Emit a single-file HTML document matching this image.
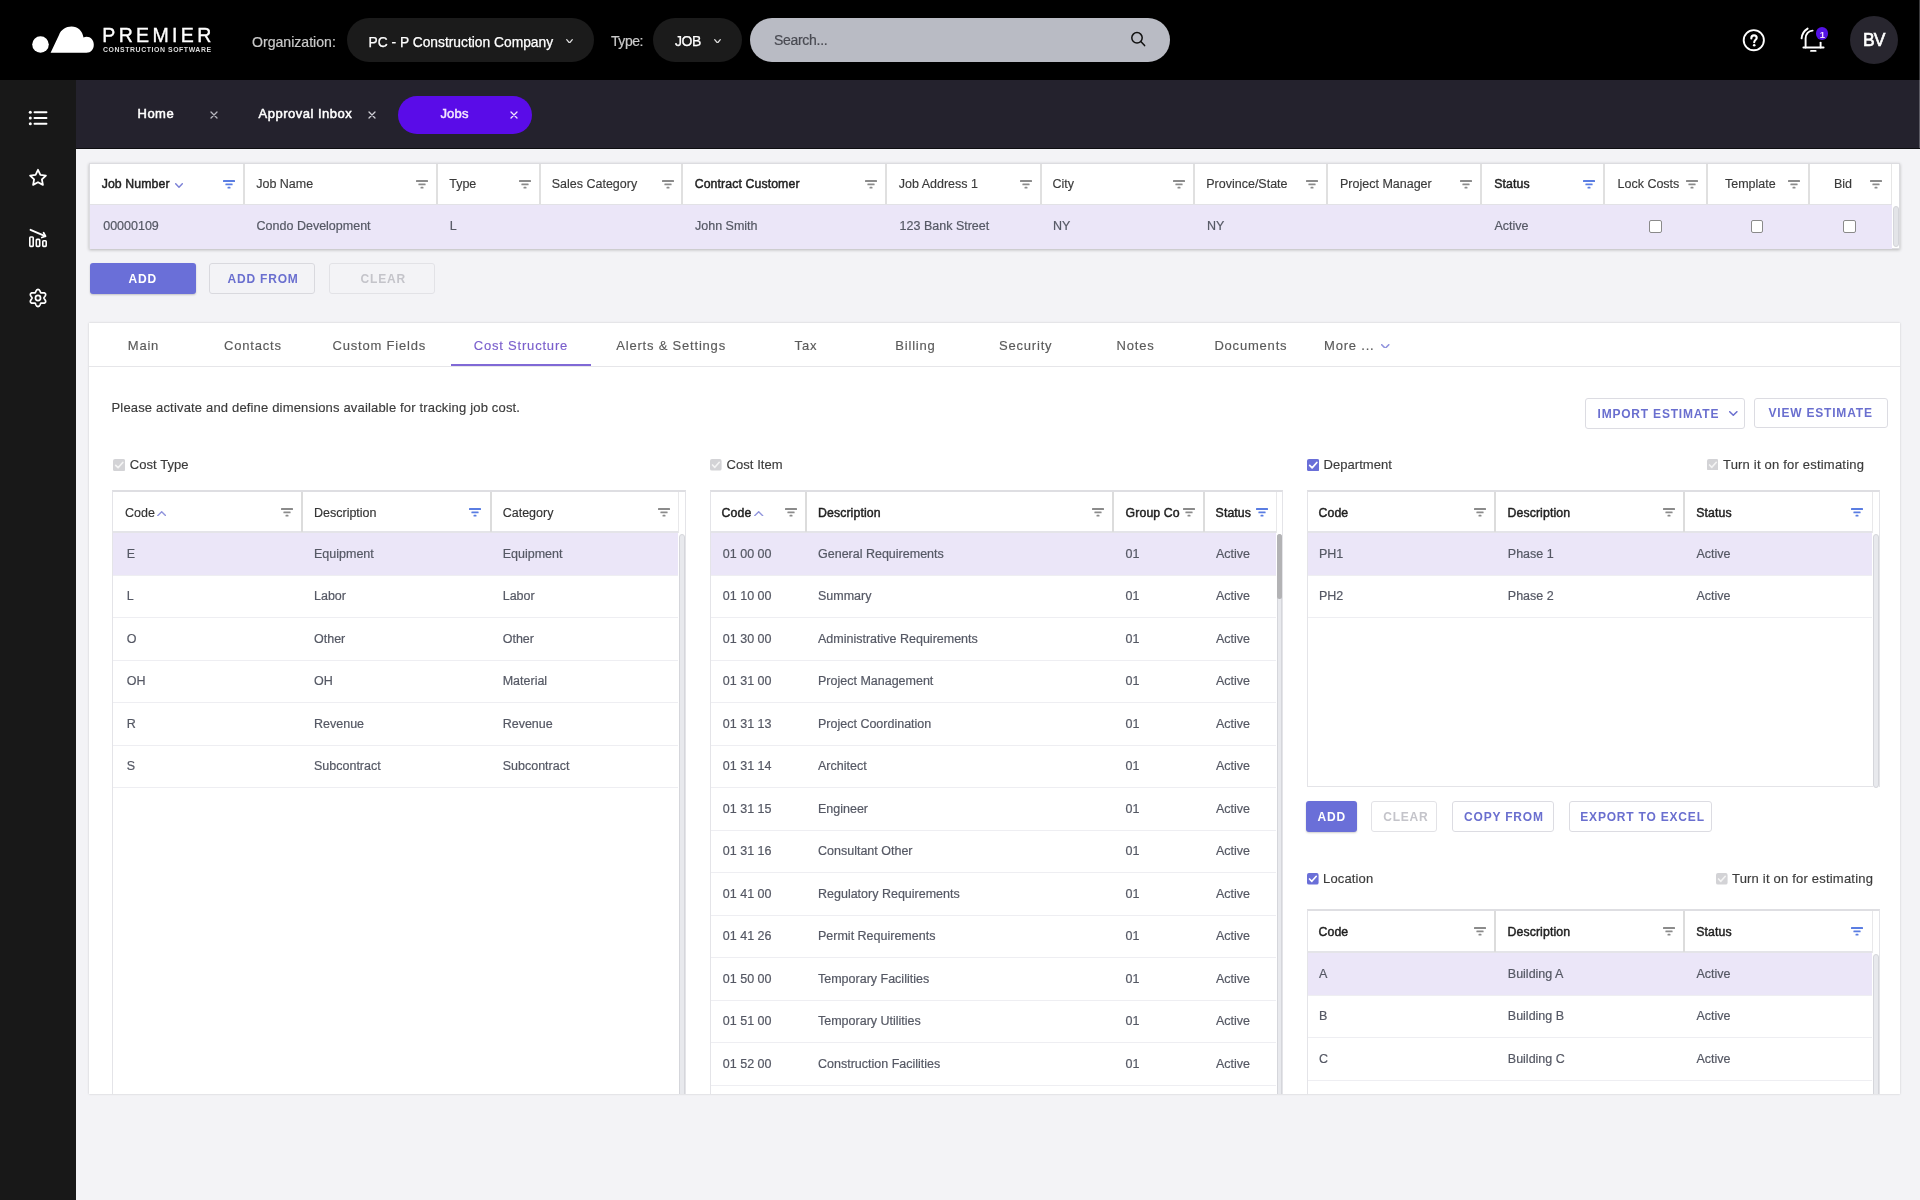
<!DOCTYPE html><html><head><meta charset="utf-8"><style>html,body{margin:0;padding:0;width:1920px;height:1200px;overflow:hidden;background:#f3f3f6;font-family:"Liberation Sans",sans-serif}#root{position:relative;width:1920px;height:1200px;overflow:hidden;will-change:transform}</style></head><body><div id="root"><div style="position:absolute;left:0px;top:0px;width:1920px;height:80px;background:#000"></div><svg style="position:absolute;left:28px;top:22px" width="70" height="36" viewBox="0 0 70 36"><circle cx="12.5" cy="22.5" r="8.3" fill="#fff"/><path d="M22.6 30.7 L31 13 C33 7.5 38 4.5 43.5 4.5 C50 4.5 54.5 9 55.5 15.5 C56.5 15 57.5 14.8 58.5 14.8 C62.8 14.8 65.8 18.3 65.8 22.7 C65.8 27.2 62.8 30.7 58.5 30.7 Z" fill="#fff"/></svg><div style="position:absolute;left:102.3px;top:24px;font-size:19.5px;line-height:22.42px;color:#fff;font-weight:400;letter-spacing:3.35px;white-space:pre;-webkit-text-stroke:0.35px #fff">PREMIER</div><div style="position:absolute;left:103px;top:46px;font-size:6.9px;line-height:7.93px;color:#ddd;font-weight:700;letter-spacing:0.58px;white-space:pre;">CONSTRUCTION SOFTWARE</div><div style="position:absolute;left:252px;top:34px;font-size:14.1px;line-height:16.21px;color:#c9c9c9;font-weight:400;letter-spacing:0px;white-space:pre;-webkit-text-stroke:0.2px #c9c9c9">Organization:</div><div style="position:absolute;left:347px;top:18px;width:247px;height:44px;background:#1b1b1b;border-radius:22px"></div><div style="position:absolute;left:368.5px;top:35px;font-size:13.8px;line-height:15.87px;color:#fff;font-weight:400;letter-spacing:0px;white-space:pre;-webkit-text-stroke:0.25px #fff">PC - P Construction Company</div><svg style="position:absolute;left:566px;top:38.5px" width="7" height="4.5" viewBox="0 0 7 4.5"><path d="M0.7 0.7 L3.5 4.0 L6.3 0.7" fill="none" stroke="#ddd" stroke-width="1.3" stroke-linecap="round" stroke-linejoin="round"/></svg><div style="position:absolute;left:611px;top:33px;font-size:14px;line-height:16.10px;color:#c9c9c9;font-weight:400;letter-spacing:-0.45px;white-space:pre;-webkit-text-stroke:0.2px #c9c9c9">Type:</div><div style="position:absolute;left:653px;top:18px;width:89px;height:44px;background:#1b1b1b;border-radius:22px"></div><div style="position:absolute;left:675px;top:33px;font-size:14px;line-height:16.10px;color:#fff;font-weight:400;letter-spacing:-0.4px;white-space:pre;-webkit-text-stroke:0.25px #fff">JOB</div><svg style="position:absolute;left:714px;top:38.5px" width="7" height="4.5" viewBox="0 0 7 4.5"><path d="M0.7 0.7 L3.5 4.0 L6.3 0.7" fill="none" stroke="#ddd" stroke-width="1.3" stroke-linecap="round" stroke-linejoin="round"/></svg><div style="position:absolute;left:750px;top:18px;width:420px;height:44px;background:#b9bbc4;border-radius:22px"></div><div style="position:absolute;left:774px;top:32px;font-size:14px;line-height:16.10px;color:#494a52;font-weight:400;letter-spacing:-0.3px;white-space:pre;-webkit-text-stroke:0.2px #494a52">Search...</div><svg style="position:absolute;left:1128px;top:29px" width="20" height="20" viewBox="0 0 20 20"><circle cx="9" cy="8.8" r="5.2" fill="none" stroke="#111" stroke-width="1.5"/><path d="M12.8 12.6 L16.6 16.6" stroke="#111" stroke-width="1.5" stroke-linecap="round"/></svg><svg style="position:absolute;left:1740px;top:26px" width="28" height="28" viewBox="0 0 28 28"><circle cx="13.8" cy="14.2" r="10.1" fill="none" stroke="#fff" stroke-width="1.9"/><path d="M11.3 12.4 C11.3 10.5 12.4 9.4 14 9.4 C15.6 9.4 16.7 10.4 16.7 11.9 C16.7 13.6 14.2 14 14.2 16.3" fill="none" stroke="#fff" stroke-width="2.1" stroke-linecap="round"/><circle cx="14.2" cy="19.2" r="1.3" fill="#fff"/></svg><svg style="position:absolute;left:1796px;top:24px" width="34" height="32" viewBox="0 0 34 32"><path d="M7.4 23.5 L27.6 23.5" stroke="#fff" stroke-width="1.9" stroke-linecap="round"/><path d="M9.6 23.5 L9.6 14.5 C9.6 10 12.6 6.8 16.6 6.6" fill="none" stroke="#fff" stroke-width="1.9" stroke-linecap="round"/><path d="M24.6 23.5 L24.6 18.6" fill="none" stroke="#fff" stroke-width="1.9" stroke-linecap="round"/><path d="M5.6 14.4 C5.9 10.4 8 6.8 11.6 4.6" fill="none" stroke="#fff" stroke-width="1.9" stroke-linecap="round"/><path d="M15 26.9 L19.6 26.9" stroke="#fff" stroke-width="1.9" stroke-linecap="round"/></svg><div style="position:absolute;left:1816px;top:27.3px;width:12.4px;height:12.4px;border-radius:50%;background:#5412e6"></div><div style="position:absolute;left:1819.8px;top:30px;font-size:9.5px;line-height:10.92px;color:#f0dcff;font-weight:700;letter-spacing:0px;white-space:pre;">1</div><div style="position:absolute;left:1850px;top:16px;width:48px;height:48px;background:#28262f;border-radius:50%"></div><div style="position:absolute;left:1863px;top:30px;font-size:17.5px;line-height:20.12px;color:#fff;font-weight:400;letter-spacing:-0.8px;white-space:pre;-webkit-text-stroke:0.6px #fff">BV</div><div style="position:absolute;left:0px;top:80px;width:76px;height:1120px;background:#181818"></div><div style="position:absolute;left:76px;top:80px;width:1844px;height:69px;background:#24222d"></div><div style="position:absolute;left:76px;top:148px;width:1844px;height:1px;background:#0d0d10"></div><svg style="position:absolute;left:26px;top:106px" width="24" height="24" viewBox="0 0 24 24"><circle cx="4.3" cy="6.2" r="1.5" fill="#fff"/><circle cx="4.3" cy="12" r="1.5" fill="#fff"/><circle cx="4.3" cy="17.8" r="1.5" fill="#fff"/><path d="M8.5 6.2 H20.5 M8.5 12 H20.5 M8.5 17.8 H20.5" stroke="#fff" stroke-width="1.9" stroke-linecap="round"/></svg><svg style="position:absolute;left:26px;top:166px" width="24" height="24" viewBox="0 0 24 24"><path d="M12 3.8 L14.4 8.9 L19.9 9.6 L15.9 13.4 L16.9 18.9 L12 16.2 L7.1 18.9 L8.1 13.4 L4.1 9.6 L9.6 8.9 Z" fill="none" stroke="#fff" stroke-width="1.8" stroke-linejoin="round"/></svg><svg style="position:absolute;left:26px;top:226px" width="24" height="24" viewBox="0 0 24 24"><path d="M4.5 3.8 L19.2 10.2" stroke="#fff" stroke-width="1.8" stroke-linecap="round"/><path d="M15.8 11.5 L19.5 10.2 L17.6 6.8" fill="none" stroke="#fff" stroke-width="1.8" stroke-linecap="round" stroke-linejoin="round"/><rect x="3.8" y="11" width="3.4" height="9.4" rx="0.8" fill="none" stroke="#fff" stroke-width="1.6"/><rect x="10.3" y="13.4" width="3.4" height="7" rx="0.8" fill="none" stroke="#fff" stroke-width="1.6"/><rect x="16.8" y="14.8" width="3.4" height="5.6" rx="0.8" fill="none" stroke="#fff" stroke-width="1.6"/></svg><svg style="position:absolute;left:26px;top:286px" width="24" height="24" viewBox="0 0 24 24"><path d="M17.90 12.00 L17.99 11.69 L18.19 11.35 L18.47 10.98 L18.79 10.56 L19.10 10.10 L19.36 9.61 L19.56 9.10 L19.64 8.60 L19.61 8.12 L19.45 7.70 L19.16 7.35 L18.77 7.08 L18.29 6.91 L17.75 6.82 L17.20 6.80 L16.64 6.84 L16.12 6.91 L15.66 6.96 L15.27 6.97 L14.95 6.89 L14.72 6.66 L14.53 6.31 L14.35 5.88 L14.14 5.40 L13.90 4.90 L13.61 4.43 L13.27 4.01 L12.87 3.68 L12.45 3.47 L12.00 3.40 L11.55 3.47 L11.13 3.68 L10.73 4.01 L10.39 4.43 L10.10 4.90 L9.86 5.40 L9.65 5.88 L9.47 6.31 L9.28 6.66 L9.05 6.89 L8.73 6.97 L8.34 6.96 L7.88 6.91 L7.36 6.84 L6.80 6.80 L6.25 6.82 L5.71 6.91 L5.23 7.08 L4.84 7.35 L4.55 7.70 L4.39 8.12 L4.36 8.60 L4.44 9.10 L4.64 9.61 L4.90 10.10 L5.21 10.56 L5.53 10.98 L5.81 11.35 L6.01 11.69 L6.10 12.00 L6.01 12.31 L5.81 12.65 L5.53 13.02 L5.21 13.44 L4.90 13.90 L4.64 14.39 L4.44 14.90 L4.36 15.40 L4.39 15.88 L4.55 16.30 L4.84 16.65 L5.23 16.92 L5.71 17.09 L6.25 17.18 L6.80 17.20 L7.36 17.16 L7.88 17.09 L8.34 17.04 L8.73 17.03 L9.05 17.11 L9.28 17.34 L9.47 17.69 L9.65 18.12 L9.86 18.60 L10.10 19.10 L10.39 19.57 L10.73 19.99 L11.13 20.32 L11.55 20.53 L12.00 20.60 L12.45 20.53 L12.87 20.32 L13.27 19.99 L13.61 19.57 L13.90 19.10 L14.14 18.60 L14.35 18.12 L14.53 17.69 L14.72 17.34 L14.95 17.11 L15.27 17.03 L15.66 17.04 L16.12 17.09 L16.64 17.16 L17.20 17.20 L17.75 17.18 L18.29 17.09 L18.77 16.92 L19.16 16.65 L19.45 16.30 L19.61 15.88 L19.64 15.40 L19.56 14.90 L19.36 14.39 L19.10 13.90 L18.79 13.44 L18.47 13.02 L18.19 12.65 L17.99 12.31 Z" fill="none" stroke="#fff" stroke-width="1.7" stroke-linejoin="round"/><circle cx="12" cy="12" r="2.55" fill="none" stroke="#fff" stroke-width="1.7"/></svg><div style="position:absolute;left:137.5px;top:107px;font-size:13px;line-height:14.95px;color:#fff;font-weight:400;letter-spacing:0.5px;white-space:pre;-webkit-text-stroke:0.5px #fff">Home</div><svg style="position:absolute;left:210.0px;top:110.6px" width="8" height="8" viewBox="0 0 8 8"><path d="M1 1 L7 7 M7 1 L1 7" stroke="#b9b9c0" stroke-width="1.3" stroke-linecap="round"/></svg><div style="position:absolute;left:258.5px;top:107px;font-size:13px;line-height:14.95px;color:#fff;font-weight:400;letter-spacing:0.5px;white-space:pre;-webkit-text-stroke:0.5px #fff">Approval Inbox</div><svg style="position:absolute;left:367.6px;top:110.6px" width="8" height="8" viewBox="0 0 8 8"><path d="M1 1 L7 7 M7 1 L1 7" stroke="#d0d0d6" stroke-width="1.3" stroke-linecap="round"/></svg><div style="position:absolute;left:398px;top:95.5px;width:134px;height:38.3px;background:#5a0ce8;border-radius:19px"></div><div style="position:absolute;left:440.4px;top:107px;font-size:13px;line-height:14.95px;color:#f3e6ff;font-weight:400;letter-spacing:0.2px;white-space:pre;-webkit-text-stroke:0.5px #f3e6ff">Jobs</div><svg style="position:absolute;left:509.5px;top:110.6px" width="8" height="8" viewBox="0 0 8 8"><path d="M1 1 L7 7 M7 1 L1 7" stroke="#f3e6ff" stroke-width="1.3" stroke-linecap="round"/></svg><div style="position:absolute;left:89px;top:163px;width:1811px;height:86px;box-sizing:border-box;background:#fff;border:1px solid #dcdce0;box-shadow:0 1px 3px rgba(0,0,0,0.25)"></div><div style="position:absolute;left:90px;top:205px;width:1802px;height:43.5px;background:#ebe6f8"></div><div style="position:absolute;left:90px;top:204px;width:1802px;height:1px;background:#e2e2e6"></div><div style="position:absolute;left:242.9px;top:164px;width:2px;height:40px;background:#e0e0e0"></div><div style="position:absolute;left:436px;top:164px;width:2px;height:40px;background:#e0e0e0"></div><div style="position:absolute;left:538.7px;top:164px;width:2px;height:40px;background:#e0e0e0"></div><div style="position:absolute;left:681.2px;top:164px;width:2px;height:40px;background:#e0e0e0"></div><div style="position:absolute;left:885.25px;top:164px;width:2px;height:40px;background:#e0e0e0"></div><div style="position:absolute;left:1039.5px;top:164px;width:2px;height:40px;background:#e0e0e0"></div><div style="position:absolute;left:1193.25px;top:164px;width:2px;height:40px;background:#e0e0e0"></div><div style="position:absolute;left:1325.75px;top:164px;width:2px;height:40px;background:#e0e0e0"></div><div style="position:absolute;left:1479.8px;top:164px;width:2px;height:40px;background:#e0e0e0"></div><div style="position:absolute;left:1603.2px;top:164px;width:2px;height:40px;background:#e0e0e0"></div><div style="position:absolute;left:1705.7px;top:164px;width:2px;height:40px;background:#e0e0e0"></div><div style="position:absolute;left:1807.7px;top:164px;width:2px;height:40px;background:#e0e0e0"></div><div style="position:absolute;left:1890.8px;top:164px;width:1.2px;height:40px;background:#e6e6e6"></div><div style="position:absolute;left:1892.5px;top:205.5px;width:6px;height:41px;background:#e3e4e8;border-radius:3px;box-sizing:border-box;border:1px solid #d4d5da"></div><div style="position:absolute;left:101.7px;top:177px;font-size:12.3px;line-height:14.14px;color:#1f1f1f;font-weight:400;letter-spacing:0.1px;white-space:pre;-webkit-text-stroke:0.45px #1f1f1f">Job Number</div><svg style="position:absolute;left:223px;top:180.4px" width="12" height="9" viewBox="0 0 12 9"><rect x="0" y="0" width="12" height="1.9" rx="0.5" fill="#5a7de2"/><rect x="2.4" y="3.5" width="7.2" height="1.7" rx="0.5" fill="#5a7de2"/><rect x="4.5" y="6.8" width="3" height="1.8" rx="0.6" fill="#5a7de2"/></svg><div style="position:absolute;left:256.2px;top:177px;font-size:12.5px;line-height:14.37px;color:#3a3a3a;font-weight:400;letter-spacing:0px;white-space:pre;-webkit-text-stroke:0.15px #3a3a3a">Job Name</div><svg style="position:absolute;left:416.3px;top:180.4px" width="12" height="9" viewBox="0 0 12 9"><rect x="0" y="0" width="12" height="1.9" rx="0.5" fill="#8b8b8b"/><rect x="2.4" y="3.5" width="7.2" height="1.7" rx="0.5" fill="#8b8b8b"/><rect x="4.5" y="6.8" width="3" height="1.8" rx="0.6" fill="#8b8b8b"/></svg><div style="position:absolute;left:449.2px;top:177px;font-size:12.5px;line-height:14.37px;color:#3a3a3a;font-weight:400;letter-spacing:0px;white-space:pre;-webkit-text-stroke:0.15px #3a3a3a">Type</div><svg style="position:absolute;left:518.7px;top:180.4px" width="12" height="9" viewBox="0 0 12 9"><rect x="0" y="0" width="12" height="1.9" rx="0.5" fill="#8b8b8b"/><rect x="2.4" y="3.5" width="7.2" height="1.7" rx="0.5" fill="#8b8b8b"/><rect x="4.5" y="6.8" width="3" height="1.8" rx="0.6" fill="#8b8b8b"/></svg><div style="position:absolute;left:551.7px;top:177px;font-size:12.5px;line-height:14.37px;color:#3a3a3a;font-weight:400;letter-spacing:0px;white-space:pre;-webkit-text-stroke:0.15px #3a3a3a">Sales Category</div><svg style="position:absolute;left:661.7px;top:180.4px" width="12" height="9" viewBox="0 0 12 9"><rect x="0" y="0" width="12" height="1.9" rx="0.5" fill="#8b8b8b"/><rect x="2.4" y="3.5" width="7.2" height="1.7" rx="0.5" fill="#8b8b8b"/><rect x="4.5" y="6.8" width="3" height="1.8" rx="0.6" fill="#8b8b8b"/></svg><div style="position:absolute;left:694.7px;top:177px;font-size:12.3px;line-height:14.14px;color:#1f1f1f;font-weight:400;letter-spacing:0.1px;white-space:pre;-webkit-text-stroke:0.45px #1f1f1f">Contract Customer</div><svg style="position:absolute;left:865px;top:180.4px" width="12" height="9" viewBox="0 0 12 9"><rect x="0" y="0" width="12" height="1.9" rx="0.5" fill="#8b8b8b"/><rect x="2.4" y="3.5" width="7.2" height="1.7" rx="0.5" fill="#8b8b8b"/><rect x="4.5" y="6.8" width="3" height="1.8" rx="0.6" fill="#8b8b8b"/></svg><div style="position:absolute;left:898.75px;top:177px;font-size:12.5px;line-height:14.37px;color:#3a3a3a;font-weight:400;letter-spacing:0px;white-space:pre;-webkit-text-stroke:0.15px #3a3a3a">Job Address 1</div><svg style="position:absolute;left:1019.5px;top:180.4px" width="12" height="9" viewBox="0 0 12 9"><rect x="0" y="0" width="12" height="1.9" rx="0.5" fill="#8b8b8b"/><rect x="2.4" y="3.5" width="7.2" height="1.7" rx="0.5" fill="#8b8b8b"/><rect x="4.5" y="6.8" width="3" height="1.8" rx="0.6" fill="#8b8b8b"/></svg><div style="position:absolute;left:1052.5px;top:177px;font-size:12.5px;line-height:14.37px;color:#3a3a3a;font-weight:400;letter-spacing:0px;white-space:pre;-webkit-text-stroke:0.15px #3a3a3a">City</div><svg style="position:absolute;left:1173.2px;top:180.4px" width="12" height="9" viewBox="0 0 12 9"><rect x="0" y="0" width="12" height="1.9" rx="0.5" fill="#8b8b8b"/><rect x="2.4" y="3.5" width="7.2" height="1.7" rx="0.5" fill="#8b8b8b"/><rect x="4.5" y="6.8" width="3" height="1.8" rx="0.6" fill="#8b8b8b"/></svg><div style="position:absolute;left:1206.25px;top:177px;font-size:12.5px;line-height:14.37px;color:#3a3a3a;font-weight:400;letter-spacing:0px;white-space:pre;-webkit-text-stroke:0.15px #3a3a3a">Province/State</div><svg style="position:absolute;left:1306px;top:180.4px" width="12" height="9" viewBox="0 0 12 9"><rect x="0" y="0" width="12" height="1.9" rx="0.5" fill="#8b8b8b"/><rect x="2.4" y="3.5" width="7.2" height="1.7" rx="0.5" fill="#8b8b8b"/><rect x="4.5" y="6.8" width="3" height="1.8" rx="0.6" fill="#8b8b8b"/></svg><div style="position:absolute;left:1340px;top:177px;font-size:12.5px;line-height:14.37px;color:#3a3a3a;font-weight:400;letter-spacing:0px;white-space:pre;-webkit-text-stroke:0.15px #3a3a3a">Project Manager</div><svg style="position:absolute;left:1460.3px;top:180.4px" width="12" height="9" viewBox="0 0 12 9"><rect x="0" y="0" width="12" height="1.9" rx="0.5" fill="#8b8b8b"/><rect x="2.4" y="3.5" width="7.2" height="1.7" rx="0.5" fill="#8b8b8b"/><rect x="4.5" y="6.8" width="3" height="1.8" rx="0.6" fill="#8b8b8b"/></svg><div style="position:absolute;left:1494.2px;top:177px;font-size:12.3px;line-height:14.14px;color:#1f1f1f;font-weight:400;letter-spacing:0.1px;white-space:pre;-webkit-text-stroke:0.45px #1f1f1f">Status</div><svg style="position:absolute;left:1583px;top:180.4px" width="12" height="9" viewBox="0 0 12 9"><rect x="0" y="0" width="12" height="1.9" rx="0.5" fill="#5a7de2"/><rect x="2.4" y="3.5" width="7.2" height="1.7" rx="0.5" fill="#5a7de2"/><rect x="4.5" y="6.8" width="3" height="1.8" rx="0.6" fill="#5a7de2"/></svg><div style="position:absolute;left:1617.5px;top:177px;font-size:12.5px;line-height:14.37px;color:#3a3a3a;font-weight:400;letter-spacing:0px;white-space:pre;-webkit-text-stroke:0.15px #3a3a3a">Lock Costs</div><svg style="position:absolute;left:1685.8px;top:180.4px" width="12" height="9" viewBox="0 0 12 9"><rect x="0" y="0" width="12" height="1.9" rx="0.5" fill="#8b8b8b"/><rect x="2.4" y="3.5" width="7.2" height="1.7" rx="0.5" fill="#8b8b8b"/><rect x="4.5" y="6.8" width="3" height="1.8" rx="0.6" fill="#8b8b8b"/></svg><div style="position:absolute;left:1725px;top:177px;font-size:12.5px;line-height:14.37px;color:#3a3a3a;font-weight:400;letter-spacing:0px;white-space:pre;-webkit-text-stroke:0.15px #3a3a3a">Template</div><svg style="position:absolute;left:1788px;top:180.4px" width="12" height="9" viewBox="0 0 12 9"><rect x="0" y="0" width="12" height="1.9" rx="0.5" fill="#8b8b8b"/><rect x="2.4" y="3.5" width="7.2" height="1.7" rx="0.5" fill="#8b8b8b"/><rect x="4.5" y="6.8" width="3" height="1.8" rx="0.6" fill="#8b8b8b"/></svg><div style="position:absolute;left:1834px;top:177px;font-size:12.5px;line-height:14.37px;color:#3a3a3a;font-weight:400;letter-spacing:0px;white-space:pre;-webkit-text-stroke:0.15px #3a3a3a">Bid</div><svg style="position:absolute;left:1870px;top:180.4px" width="12" height="9" viewBox="0 0 12 9"><rect x="0" y="0" width="12" height="1.9" rx="0.5" fill="#8b8b8b"/><rect x="2.4" y="3.5" width="7.2" height="1.7" rx="0.5" fill="#8b8b8b"/><rect x="4.5" y="6.8" width="3" height="1.8" rx="0.6" fill="#8b8b8b"/></svg><svg style="position:absolute;left:175px;top:183px" width="8" height="4.8" viewBox="0 0 8 4.8"><path d="M0.7 0.7 L4.0 4.3 L7.3 0.7" fill="none" stroke="#7b80d6" stroke-width="1.4" stroke-linecap="round" stroke-linejoin="round"/></svg><div style="position:absolute;left:103.2px;top:219px;font-size:12.5px;line-height:14.37px;color:#555864;font-weight:400;letter-spacing:0px;white-space:pre;-webkit-text-stroke:0.2px #555864">00000109</div><div style="position:absolute;left:256.6px;top:219px;font-size:12.5px;line-height:14.37px;color:#555864;font-weight:400;letter-spacing:0px;white-space:pre;-webkit-text-stroke:0.2px #555864">Condo Development</div><div style="position:absolute;left:449.7px;top:219px;font-size:12.5px;line-height:14.37px;color:#555864;font-weight:400;letter-spacing:0px;white-space:pre;-webkit-text-stroke:0.2px #555864">L</div><div style="position:absolute;left:695px;top:219px;font-size:12.5px;line-height:14.37px;color:#555864;font-weight:400;letter-spacing:0px;white-space:pre;-webkit-text-stroke:0.2px #555864">John Smith</div><div style="position:absolute;left:899.6px;top:219px;font-size:12.5px;line-height:14.37px;color:#555864;font-weight:400;letter-spacing:0px;white-space:pre;-webkit-text-stroke:0.2px #555864">123 Bank Street</div><div style="position:absolute;left:1053px;top:219px;font-size:12.5px;line-height:14.37px;color:#555864;font-weight:400;letter-spacing:0px;white-space:pre;-webkit-text-stroke:0.2px #555864">NY</div><div style="position:absolute;left:1207px;top:219px;font-size:12.5px;line-height:14.37px;color:#555864;font-weight:400;letter-spacing:0px;white-space:pre;-webkit-text-stroke:0.2px #555864">NY</div><div style="position:absolute;left:1494.5px;top:219px;font-size:12.5px;line-height:14.37px;color:#555864;font-weight:400;letter-spacing:0px;white-space:pre;-webkit-text-stroke:0.2px #555864">Active</div><div style="position:absolute;left:1649px;top:220px;width:12.5px;height:12.5px;box-sizing:border-box;border:1.3px solid #8a8a8a;border-radius:2px;background:#fff"></div><div style="position:absolute;left:1750.8px;top:220px;width:12.5px;height:12.5px;box-sizing:border-box;border:1.3px solid #8a8a8a;border-radius:2px;background:#fff"></div><div style="position:absolute;left:1843px;top:220px;width:12.5px;height:12.5px;box-sizing:border-box;border:1.3px solid #8a8a8a;border-radius:2px;background:#fff"></div><div style="position:absolute;left:89.7px;top:262.5px;width:106px;height:31px;background:#6a6fd8;border-radius:3px;box-shadow:0 1px 2px rgba(0,0,0,0.2)"></div><div style="position:absolute;left:128.5px;top:273px;font-size:12px;line-height:13.80px;color:#fff;font-weight:700;letter-spacing:0.8px;white-space:pre;">ADD</div><div style="position:absolute;left:208.8px;top:262.5px;width:106px;height:31px;box-sizing:border-box;background:transparent;border:1px solid #d9d9de;border-radius:3px"></div><div style="position:absolute;left:227.5px;top:273px;font-size:12px;line-height:13.80px;color:#6a6fcf;font-weight:700;letter-spacing:0.8px;white-space:pre;">ADD FROM</div><div style="position:absolute;left:328.8px;top:262.5px;width:106px;height:31px;box-sizing:border-box;background:transparent;border:1px solid #e2e2e6;border-radius:3px"></div><div style="position:absolute;left:360.6px;top:273px;font-size:12px;line-height:13.80px;color:#c4c4ca;font-weight:700;letter-spacing:0.8px;white-space:pre;">CLEAR</div><div style="position:absolute;left:89px;top:323px;width:1811px;height:771px;background:#fff;box-shadow:0 0 2px rgba(0,0,0,0.18);overflow:hidden" id="card"><div style="position:absolute;left:0px;top:43px;width:1811px;height:1.3px;background:#e6e6e9"></div><div style="position:absolute;left:38.75px;top:16px;font-size:13px;line-height:14.95px;color:#5a5a5a;font-weight:400;letter-spacing:0.8px;white-space:pre;-webkit-text-stroke:0.15px #5a5a5a">Main</div><div style="position:absolute;left:135.1px;top:16px;font-size:13px;line-height:14.95px;color:#5a5a5a;font-weight:400;letter-spacing:0.8px;white-space:pre;-webkit-text-stroke:0.15px #5a5a5a">Contacts</div><div style="position:absolute;left:243.5px;top:16px;font-size:13px;line-height:14.95px;color:#5a5a5a;font-weight:400;letter-spacing:0.8px;white-space:pre;-webkit-text-stroke:0.15px #5a5a5a">Custom Fields</div><div style="position:absolute;left:384.75px;top:16px;font-size:13px;line-height:14.95px;color:#7a5fcc;font-weight:400;letter-spacing:0.8px;white-space:pre;-webkit-text-stroke:0.15px #7a5fcc">Cost Structure</div><div style="position:absolute;left:527.25px;top:16px;font-size:13px;line-height:14.95px;color:#5a5a5a;font-weight:400;letter-spacing:0.8px;white-space:pre;-webkit-text-stroke:0.15px #5a5a5a">Alerts & Settings</div><div style="position:absolute;left:705.6px;top:16px;font-size:13px;line-height:14.95px;color:#5a5a5a;font-weight:400;letter-spacing:0.8px;white-space:pre;-webkit-text-stroke:0.15px #5a5a5a">Tax</div><div style="position:absolute;left:806.3px;top:16px;font-size:13px;line-height:14.95px;color:#5a5a5a;font-weight:400;letter-spacing:0.8px;white-space:pre;-webkit-text-stroke:0.15px #5a5a5a">Billing</div><div style="position:absolute;left:910px;top:16px;font-size:13px;line-height:14.95px;color:#5a5a5a;font-weight:400;letter-spacing:0.8px;white-space:pre;-webkit-text-stroke:0.15px #5a5a5a">Security</div><div style="position:absolute;left:1027.5px;top:16px;font-size:13px;line-height:14.95px;color:#5a5a5a;font-weight:400;letter-spacing:0.8px;white-space:pre;-webkit-text-stroke:0.15px #5a5a5a">Notes</div><div style="position:absolute;left:1125.4px;top:16px;font-size:13px;line-height:14.95px;color:#5a5a5a;font-weight:400;letter-spacing:0.8px;white-space:pre;-webkit-text-stroke:0.15px #5a5a5a">Documents</div><div style="position:absolute;left:1235px;top:16px;font-size:13px;line-height:14.95px;color:#5a5a5a;font-weight:400;letter-spacing:0.8px;white-space:pre;-webkit-text-stroke:0.15px #5a5a5a">More ...</div><svg style="position:absolute;left:1292.25px;top:20.600000000000023px" width="8.5" height="4.8" viewBox="0 0 8.5 4.8"><path d="M0.7 0.7 L4.25 4.3 L7.8 0.7" fill="none" stroke="#8f92dd" stroke-width="1.6" stroke-linecap="round" stroke-linejoin="round"/></svg><div style="position:absolute;left:362.25px;top:41px;width:139.4px;height:2px;background:#8069d6"></div><div style="position:absolute;left:22.5px;top:78px;font-size:13px;line-height:14.95px;color:#3b3b3b;font-weight:400;letter-spacing:0.17px;white-space:pre;-webkit-text-stroke:0.15px #3b3b3b">Please activate and define dimensions available for tracking job cost.</div><div style="position:absolute;left:1495.6px;top:74.69999999999999px;width:160.7px;height:31.5px;box-sizing:border-box;background:#fff;border:1px solid #dcdce2;border-radius:3px"></div><div style="position:absolute;left:1508.5px;top:85px;font-size:12px;line-height:13.80px;color:#6a6fcf;font-weight:700;letter-spacing:0.8px;white-space:pre;">IMPORT ESTIMATE</div><svg style="position:absolute;left:1640px;top:88.19999999999999px" width="8.6" height="4.8" viewBox="0 0 8.6 4.8"><path d="M0.7 0.7 L4.3 4.3 L7.8999999999999995 0.7" fill="none" stroke="#6a6fcf" stroke-width="1.5" stroke-linecap="round" stroke-linejoin="round"/></svg><div style="position:absolute;left:1664.6px;top:74.69999999999999px;width:134.7px;height:30.5px;box-sizing:border-box;background:#fff;border:1px solid #dcdce2;border-radius:3px"></div><div style="position:absolute;left:1679.5px;top:84px;font-size:12px;line-height:13.80px;color:#6a6fcf;font-weight:700;letter-spacing:0.8px;white-space:pre;">VIEW ESTIMATE</div><svg style="position:absolute;left:24px;top:135.7px" width="12.2" height="12.2" viewBox="0 0 12 12"><rect x="0" y="0" width="12" height="12" rx="2" fill="#d3d3d6"/><path d="M2.6 6.2 L5 8.6 L9.6 3.4" fill="none" stroke="#f4f4f4" stroke-width="1.7" stroke-linecap="round" stroke-linejoin="round"/></svg><div style="position:absolute;left:40.80000000000001px;top:135px;font-size:13px;line-height:14.95px;color:#3b3b3b;font-weight:400;letter-spacing:0.05px;white-space:pre;-webkit-text-stroke:0.15px #3b3b3b">Cost Type</div><svg style="position:absolute;left:621.3px;top:136.10000000000002px" width="11.6" height="11.6" viewBox="0 0 12 12"><rect x="0" y="0" width="12" height="12" rx="2" fill="#d3d3d6"/><path d="M2.6 6.2 L5 8.6 L9.6 3.4" fill="none" stroke="#f4f4f4" stroke-width="1.7" stroke-linecap="round" stroke-linejoin="round"/></svg><div style="position:absolute;left:637.6px;top:135px;font-size:13px;line-height:14.95px;color:#3b3b3b;font-weight:400;letter-spacing:0.05px;white-space:pre;-webkit-text-stroke:0.15px #3b3b3b">Cost Item</div><svg style="position:absolute;left:1217.9px;top:135.5px" width="12.3" height="12.3" viewBox="0 0 12 12"><rect x="0" y="0" width="12" height="12" rx="2" fill="#6a6fd8"/><path d="M2.6 6.2 L5 8.6 L9.6 3.4" fill="none" stroke="#fff" stroke-width="1.7" stroke-linecap="round" stroke-linejoin="round"/></svg><div style="position:absolute;left:1234.5px;top:135px;font-size:13px;line-height:14.95px;color:#3b3b3b;font-weight:400;letter-spacing:0.05px;white-space:pre;-webkit-text-stroke:0.15px #3b3b3b">Department</div><svg style="position:absolute;left:1617.9px;top:135.5px" width="11.6" height="11.6" viewBox="0 0 12 12"><rect x="0" y="0" width="12" height="12" rx="2" fill="#d3d3d6"/><path d="M2.6 6.2 L5 8.6 L9.6 3.4" fill="none" stroke="#f4f4f4" stroke-width="1.7" stroke-linecap="round" stroke-linejoin="round"/></svg><div style="position:absolute;left:1634px;top:135px;font-size:13px;line-height:14.95px;color:#3b3b3b;font-weight:400;letter-spacing:0.2px;white-space:pre;-webkit-text-stroke:0.15px #3b3b3b">Turn it on for estimating</div><div style="position:absolute;left:23.400000000000006px;top:167px;width:573.6px;height:610px;box-sizing:border-box;border:1px solid #e4e4e8;border-top:2px solid #dedee2;border-bottom:none;background:#fff"></div><div style="position:absolute;left:24.400000000000006px;top:208.0px;width:564.6px;height:2px;background:#e4e4e8"></div><div style="position:absolute;left:212px;top:169px;width:2px;height:39.5px;background:#dcdcdc"></div><div style="position:absolute;left:400.5px;top:169px;width:2px;height:39.5px;background:#dcdcdc"></div><div style="position:absolute;left:589px;top:169px;width:1px;height:40.5px;background:#e8e8ea"></div><div style="position:absolute;left:36px;top:183px;font-size:12.5px;line-height:14.37px;color:#333;font-weight:400;letter-spacing:0px;white-space:pre;-webkit-text-stroke:0.15px #333">Code</div><svg style="position:absolute;left:192.2px;top:184.75px" width="12" height="9" viewBox="0 0 12 9"><rect x="0" y="0" width="12" height="1.9" rx="0.5" fill="#8b8b8b"/><rect x="2.4" y="3.5" width="7.2" height="1.7" rx="0.5" fill="#8b8b8b"/><rect x="4.5" y="6.8" width="3" height="1.8" rx="0.6" fill="#8b8b8b"/></svg><svg style="position:absolute;left:68px;top:187.55px" width="9.4" height="5" viewBox="0 0 9.4 5"><path d="M0.7 4.7 L4.7 0.7 L8.700000000000001 4.7" fill="none" stroke="#9094dc" stroke-width="1.4" stroke-linecap="round" stroke-linejoin="round"/></svg><div style="position:absolute;left:225px;top:183px;font-size:12.5px;line-height:14.37px;color:#333;font-weight:400;letter-spacing:0px;white-space:pre;-webkit-text-stroke:0.15px #333">Description</div><svg style="position:absolute;left:380.3px;top:184.75px" width="12" height="9" viewBox="0 0 12 9"><rect x="0" y="0" width="12" height="1.9" rx="0.5" fill="#5a7de2"/><rect x="2.4" y="3.5" width="7.2" height="1.7" rx="0.5" fill="#5a7de2"/><rect x="4.5" y="6.8" width="3" height="1.8" rx="0.6" fill="#5a7de2"/></svg><div style="position:absolute;left:413.7px;top:183px;font-size:12.5px;line-height:14.37px;color:#333;font-weight:400;letter-spacing:0px;white-space:pre;-webkit-text-stroke:0.15px #333">Category</div><svg style="position:absolute;left:569px;top:184.75px" width="12" height="9" viewBox="0 0 12 9"><rect x="0" y="0" width="12" height="1.9" rx="0.5" fill="#8b8b8b"/><rect x="2.4" y="3.5" width="7.2" height="1.7" rx="0.5" fill="#8b8b8b"/><rect x="4.5" y="6.8" width="3" height="1.8" rx="0.6" fill="#8b8b8b"/></svg><div style="position:absolute;left:24.400000000000006px;top:210.0px;width:564.6px;height:42.5px;background:#ebe6f8"></div><div style="position:absolute;left:37.8px;top:224px;font-size:12.5px;line-height:14.37px;color:#555864;font-weight:400;letter-spacing:0px;white-space:pre;-webkit-text-stroke:0.2px #555864">E</div><div style="position:absolute;left:225px;top:224px;font-size:12.5px;line-height:14.37px;color:#555864;font-weight:400;letter-spacing:0px;white-space:pre;-webkit-text-stroke:0.2px #555864">Equipment</div><div style="position:absolute;left:413.7px;top:224px;font-size:12.5px;line-height:14.37px;color:#555864;font-weight:400;letter-spacing:0px;white-space:pre;-webkit-text-stroke:0.2px #555864">Equipment</div><div style="position:absolute;left:37.8px;top:266px;font-size:12.5px;line-height:14.37px;color:#555864;font-weight:400;letter-spacing:0px;white-space:pre;-webkit-text-stroke:0.2px #555864">L</div><div style="position:absolute;left:225px;top:266px;font-size:12.5px;line-height:14.37px;color:#555864;font-weight:400;letter-spacing:0px;white-space:pre;-webkit-text-stroke:0.2px #555864">Labor</div><div style="position:absolute;left:413.7px;top:266px;font-size:12.5px;line-height:14.37px;color:#555864;font-weight:400;letter-spacing:0px;white-space:pre;-webkit-text-stroke:0.2px #555864">Labor</div><div style="position:absolute;left:37.8px;top:309px;font-size:12.5px;line-height:14.37px;color:#555864;font-weight:400;letter-spacing:0px;white-space:pre;-webkit-text-stroke:0.2px #555864">O</div><div style="position:absolute;left:225px;top:309px;font-size:12.5px;line-height:14.37px;color:#555864;font-weight:400;letter-spacing:0px;white-space:pre;-webkit-text-stroke:0.2px #555864">Other</div><div style="position:absolute;left:413.7px;top:309px;font-size:12.5px;line-height:14.37px;color:#555864;font-weight:400;letter-spacing:0px;white-space:pre;-webkit-text-stroke:0.2px #555864">Other</div><div style="position:absolute;left:37.8px;top:351px;font-size:12.5px;line-height:14.37px;color:#555864;font-weight:400;letter-spacing:0px;white-space:pre;-webkit-text-stroke:0.2px #555864">OH</div><div style="position:absolute;left:225px;top:351px;font-size:12.5px;line-height:14.37px;color:#555864;font-weight:400;letter-spacing:0px;white-space:pre;-webkit-text-stroke:0.2px #555864">OH</div><div style="position:absolute;left:413.7px;top:351px;font-size:12.5px;line-height:14.37px;color:#555864;font-weight:400;letter-spacing:0px;white-space:pre;-webkit-text-stroke:0.2px #555864">Material</div><div style="position:absolute;left:37.8px;top:394px;font-size:12.5px;line-height:14.37px;color:#555864;font-weight:400;letter-spacing:0px;white-space:pre;-webkit-text-stroke:0.2px #555864">R</div><div style="position:absolute;left:225px;top:394px;font-size:12.5px;line-height:14.37px;color:#555864;font-weight:400;letter-spacing:0px;white-space:pre;-webkit-text-stroke:0.2px #555864">Revenue</div><div style="position:absolute;left:413.7px;top:394px;font-size:12.5px;line-height:14.37px;color:#555864;font-weight:400;letter-spacing:0px;white-space:pre;-webkit-text-stroke:0.2px #555864">Revenue</div><div style="position:absolute;left:37.8px;top:436px;font-size:12.5px;line-height:14.37px;color:#555864;font-weight:400;letter-spacing:0px;white-space:pre;-webkit-text-stroke:0.2px #555864">S</div><div style="position:absolute;left:225px;top:436px;font-size:12.5px;line-height:14.37px;color:#555864;font-weight:400;letter-spacing:0px;white-space:pre;-webkit-text-stroke:0.2px #555864">Subcontract</div><div style="position:absolute;left:413.7px;top:436px;font-size:12.5px;line-height:14.37px;color:#555864;font-weight:400;letter-spacing:0px;white-space:pre;-webkit-text-stroke:0.2px #555864">Subcontract</div><div style="position:absolute;left:24.400000000000006px;top:251.5px;width:564.6px;height:1px;background:#eeeef2"></div><div style="position:absolute;left:24.400000000000006px;top:294.0px;width:564.6px;height:1px;background:#eeeef2"></div><div style="position:absolute;left:24.400000000000006px;top:336.5px;width:564.6px;height:1px;background:#eeeef2"></div><div style="position:absolute;left:24.400000000000006px;top:379.0px;width:564.6px;height:1px;background:#eeeef2"></div><div style="position:absolute;left:24.400000000000006px;top:421.5px;width:564.6px;height:1px;background:#eeeef2"></div><div style="position:absolute;left:24.400000000000006px;top:464.0px;width:564.6px;height:1px;background:#eeeef2"></div><div style="position:absolute;left:590px;top:210.5px;width:6px;height:567.5px;background:#e8e9ed;border-radius:3px;box-sizing:border-box;border:1px solid #d5d6db"></div><div style="position:absolute;left:620.6px;top:167px;width:573.4px;height:610px;box-sizing:border-box;border:1px solid #e4e4e8;border-top:2px solid #dedee2;border-bottom:none;background:#fff"></div><div style="position:absolute;left:621.6px;top:208.0px;width:564.9999999999999px;height:2px;background:#e4e4e8"></div><div style="position:absolute;left:715.6px;top:169px;width:2px;height:39.5px;background:#dcdcdc"></div><div style="position:absolute;left:1022.75px;top:169px;width:2px;height:39.5px;background:#dcdcdc"></div><div style="position:absolute;left:1113.75px;top:169px;width:2px;height:39.5px;background:#dcdcdc"></div><div style="position:absolute;left:1186.6px;top:169px;width:1px;height:40.5px;background:#e8e8ea"></div><div style="position:absolute;left:632.6px;top:183px;font-size:12.3px;line-height:14.14px;color:#1f1f1f;font-weight:400;letter-spacing:0.1px;white-space:pre;-webkit-text-stroke:0.45px #1f1f1f">Code</div><svg style="position:absolute;left:695.6px;top:184.75px" width="12" height="9" viewBox="0 0 12 9"><rect x="0" y="0" width="12" height="1.9" rx="0.5" fill="#8b8b8b"/><rect x="2.4" y="3.5" width="7.2" height="1.7" rx="0.5" fill="#8b8b8b"/><rect x="4.5" y="6.8" width="3" height="1.8" rx="0.6" fill="#8b8b8b"/></svg><svg style="position:absolute;left:665.3px;top:187.55px" width="9.4" height="5" viewBox="0 0 9.4 5"><path d="M0.7 4.7 L4.7 0.7 L8.700000000000001 4.7" fill="none" stroke="#9094dc" stroke-width="1.4" stroke-linecap="round" stroke-linejoin="round"/></svg><div style="position:absolute;left:729px;top:183px;font-size:12.3px;line-height:14.14px;color:#1f1f1f;font-weight:400;letter-spacing:0.1px;white-space:pre;-webkit-text-stroke:0.45px #1f1f1f">Description</div><svg style="position:absolute;left:1002.5px;top:184.75px" width="12" height="9" viewBox="0 0 12 9"><rect x="0" y="0" width="12" height="1.9" rx="0.5" fill="#8b8b8b"/><rect x="2.4" y="3.5" width="7.2" height="1.7" rx="0.5" fill="#8b8b8b"/><rect x="4.5" y="6.8" width="3" height="1.8" rx="0.6" fill="#8b8b8b"/></svg><div style="position:absolute;left:1036.6px;top:183px;font-size:12.3px;line-height:14.14px;color:#1f1f1f;font-weight:400;letter-spacing:0.1px;white-space:pre;-webkit-text-stroke:0.45px #1f1f1f">Group Co</div><svg style="position:absolute;left:1093.75px;top:184.75px" width="12" height="9" viewBox="0 0 12 9"><rect x="0" y="0" width="12" height="1.9" rx="0.5" fill="#8b8b8b"/><rect x="2.4" y="3.5" width="7.2" height="1.7" rx="0.5" fill="#8b8b8b"/><rect x="4.5" y="6.8" width="3" height="1.8" rx="0.6" fill="#8b8b8b"/></svg><div style="position:absolute;left:1126.6px;top:183px;font-size:12.3px;line-height:14.14px;color:#1f1f1f;font-weight:400;letter-spacing:0.1px;white-space:pre;-webkit-text-stroke:0.45px #1f1f1f">Status</div><svg style="position:absolute;left:1167px;top:184.75px" width="12" height="9" viewBox="0 0 12 9"><rect x="0" y="0" width="12" height="1.9" rx="0.5" fill="#5a7de2"/><rect x="2.4" y="3.5" width="7.2" height="1.7" rx="0.5" fill="#5a7de2"/><rect x="4.5" y="6.8" width="3" height="1.8" rx="0.6" fill="#5a7de2"/></svg><div style="position:absolute;left:621.6px;top:210.0px;width:564.9999999999999px;height:42.5px;background:#ebe6f8"></div><div style="position:absolute;left:633.8px;top:224px;font-size:12.5px;line-height:14.37px;color:#555864;font-weight:400;letter-spacing:0px;white-space:pre;-webkit-text-stroke:0.2px #555864">01 00 00</div><div style="position:absolute;left:729px;top:224px;font-size:12.5px;line-height:14.37px;color:#555864;font-weight:400;letter-spacing:0px;white-space:pre;-webkit-text-stroke:0.2px #555864">General Requirements</div><div style="position:absolute;left:1036.6px;top:224px;font-size:12.5px;line-height:14.37px;color:#555864;font-weight:400;letter-spacing:0px;white-space:pre;-webkit-text-stroke:0.2px #555864">01</div><div style="position:absolute;left:1127px;top:224px;font-size:12.5px;line-height:14.37px;color:#555864;font-weight:400;letter-spacing:0px;white-space:pre;-webkit-text-stroke:0.2px #555864">Active</div><div style="position:absolute;left:633.8px;top:266px;font-size:12.5px;line-height:14.37px;color:#555864;font-weight:400;letter-spacing:0px;white-space:pre;-webkit-text-stroke:0.2px #555864">01 10 00</div><div style="position:absolute;left:729px;top:266px;font-size:12.5px;line-height:14.37px;color:#555864;font-weight:400;letter-spacing:0px;white-space:pre;-webkit-text-stroke:0.2px #555864">Summary</div><div style="position:absolute;left:1036.6px;top:266px;font-size:12.5px;line-height:14.37px;color:#555864;font-weight:400;letter-spacing:0px;white-space:pre;-webkit-text-stroke:0.2px #555864">01</div><div style="position:absolute;left:1127px;top:266px;font-size:12.5px;line-height:14.37px;color:#555864;font-weight:400;letter-spacing:0px;white-space:pre;-webkit-text-stroke:0.2px #555864">Active</div><div style="position:absolute;left:633.8px;top:309px;font-size:12.5px;line-height:14.37px;color:#555864;font-weight:400;letter-spacing:0px;white-space:pre;-webkit-text-stroke:0.2px #555864">01 30 00</div><div style="position:absolute;left:729px;top:309px;font-size:12.5px;line-height:14.37px;color:#555864;font-weight:400;letter-spacing:0px;white-space:pre;-webkit-text-stroke:0.2px #555864">Administrative Requirements</div><div style="position:absolute;left:1036.6px;top:309px;font-size:12.5px;line-height:14.37px;color:#555864;font-weight:400;letter-spacing:0px;white-space:pre;-webkit-text-stroke:0.2px #555864">01</div><div style="position:absolute;left:1127px;top:309px;font-size:12.5px;line-height:14.37px;color:#555864;font-weight:400;letter-spacing:0px;white-space:pre;-webkit-text-stroke:0.2px #555864">Active</div><div style="position:absolute;left:633.8px;top:351px;font-size:12.5px;line-height:14.37px;color:#555864;font-weight:400;letter-spacing:0px;white-space:pre;-webkit-text-stroke:0.2px #555864">01 31 00</div><div style="position:absolute;left:729px;top:351px;font-size:12.5px;line-height:14.37px;color:#555864;font-weight:400;letter-spacing:0px;white-space:pre;-webkit-text-stroke:0.2px #555864">Project Management</div><div style="position:absolute;left:1036.6px;top:351px;font-size:12.5px;line-height:14.37px;color:#555864;font-weight:400;letter-spacing:0px;white-space:pre;-webkit-text-stroke:0.2px #555864">01</div><div style="position:absolute;left:1127px;top:351px;font-size:12.5px;line-height:14.37px;color:#555864;font-weight:400;letter-spacing:0px;white-space:pre;-webkit-text-stroke:0.2px #555864">Active</div><div style="position:absolute;left:633.8px;top:394px;font-size:12.5px;line-height:14.37px;color:#555864;font-weight:400;letter-spacing:0px;white-space:pre;-webkit-text-stroke:0.2px #555864">01 31 13</div><div style="position:absolute;left:729px;top:394px;font-size:12.5px;line-height:14.37px;color:#555864;font-weight:400;letter-spacing:0px;white-space:pre;-webkit-text-stroke:0.2px #555864">Project Coordination</div><div style="position:absolute;left:1036.6px;top:394px;font-size:12.5px;line-height:14.37px;color:#555864;font-weight:400;letter-spacing:0px;white-space:pre;-webkit-text-stroke:0.2px #555864">01</div><div style="position:absolute;left:1127px;top:394px;font-size:12.5px;line-height:14.37px;color:#555864;font-weight:400;letter-spacing:0px;white-space:pre;-webkit-text-stroke:0.2px #555864">Active</div><div style="position:absolute;left:633.8px;top:436px;font-size:12.5px;line-height:14.37px;color:#555864;font-weight:400;letter-spacing:0px;white-space:pre;-webkit-text-stroke:0.2px #555864">01 31 14</div><div style="position:absolute;left:729px;top:436px;font-size:12.5px;line-height:14.37px;color:#555864;font-weight:400;letter-spacing:0px;white-space:pre;-webkit-text-stroke:0.2px #555864">Architect</div><div style="position:absolute;left:1036.6px;top:436px;font-size:12.5px;line-height:14.37px;color:#555864;font-weight:400;letter-spacing:0px;white-space:pre;-webkit-text-stroke:0.2px #555864">01</div><div style="position:absolute;left:1127px;top:436px;font-size:12.5px;line-height:14.37px;color:#555864;font-weight:400;letter-spacing:0px;white-space:pre;-webkit-text-stroke:0.2px #555864">Active</div><div style="position:absolute;left:633.8px;top:479px;font-size:12.5px;line-height:14.37px;color:#555864;font-weight:400;letter-spacing:0px;white-space:pre;-webkit-text-stroke:0.2px #555864">01 31 15</div><div style="position:absolute;left:729px;top:479px;font-size:12.5px;line-height:14.37px;color:#555864;font-weight:400;letter-spacing:0px;white-space:pre;-webkit-text-stroke:0.2px #555864">Engineer</div><div style="position:absolute;left:1036.6px;top:479px;font-size:12.5px;line-height:14.37px;color:#555864;font-weight:400;letter-spacing:0px;white-space:pre;-webkit-text-stroke:0.2px #555864">01</div><div style="position:absolute;left:1127px;top:479px;font-size:12.5px;line-height:14.37px;color:#555864;font-weight:400;letter-spacing:0px;white-space:pre;-webkit-text-stroke:0.2px #555864">Active</div><div style="position:absolute;left:633.8px;top:521px;font-size:12.5px;line-height:14.37px;color:#555864;font-weight:400;letter-spacing:0px;white-space:pre;-webkit-text-stroke:0.2px #555864">01 31 16</div><div style="position:absolute;left:729px;top:521px;font-size:12.5px;line-height:14.37px;color:#555864;font-weight:400;letter-spacing:0px;white-space:pre;-webkit-text-stroke:0.2px #555864">Consultant Other</div><div style="position:absolute;left:1036.6px;top:521px;font-size:12.5px;line-height:14.37px;color:#555864;font-weight:400;letter-spacing:0px;white-space:pre;-webkit-text-stroke:0.2px #555864">01</div><div style="position:absolute;left:1127px;top:521px;font-size:12.5px;line-height:14.37px;color:#555864;font-weight:400;letter-spacing:0px;white-space:pre;-webkit-text-stroke:0.2px #555864">Active</div><div style="position:absolute;left:633.8px;top:564px;font-size:12.5px;line-height:14.37px;color:#555864;font-weight:400;letter-spacing:0px;white-space:pre;-webkit-text-stroke:0.2px #555864">01 41 00</div><div style="position:absolute;left:729px;top:564px;font-size:12.5px;line-height:14.37px;color:#555864;font-weight:400;letter-spacing:0px;white-space:pre;-webkit-text-stroke:0.2px #555864">Regulatory Requirements</div><div style="position:absolute;left:1036.6px;top:564px;font-size:12.5px;line-height:14.37px;color:#555864;font-weight:400;letter-spacing:0px;white-space:pre;-webkit-text-stroke:0.2px #555864">01</div><div style="position:absolute;left:1127px;top:564px;font-size:12.5px;line-height:14.37px;color:#555864;font-weight:400;letter-spacing:0px;white-space:pre;-webkit-text-stroke:0.2px #555864">Active</div><div style="position:absolute;left:633.8px;top:606px;font-size:12.5px;line-height:14.37px;color:#555864;font-weight:400;letter-spacing:0px;white-space:pre;-webkit-text-stroke:0.2px #555864">01 41 26</div><div style="position:absolute;left:729px;top:606px;font-size:12.5px;line-height:14.37px;color:#555864;font-weight:400;letter-spacing:0px;white-space:pre;-webkit-text-stroke:0.2px #555864">Permit Requirements</div><div style="position:absolute;left:1036.6px;top:606px;font-size:12.5px;line-height:14.37px;color:#555864;font-weight:400;letter-spacing:0px;white-space:pre;-webkit-text-stroke:0.2px #555864">01</div><div style="position:absolute;left:1127px;top:606px;font-size:12.5px;line-height:14.37px;color:#555864;font-weight:400;letter-spacing:0px;white-space:pre;-webkit-text-stroke:0.2px #555864">Active</div><div style="position:absolute;left:633.8px;top:649px;font-size:12.5px;line-height:14.37px;color:#555864;font-weight:400;letter-spacing:0px;white-space:pre;-webkit-text-stroke:0.2px #555864">01 50 00</div><div style="position:absolute;left:729px;top:649px;font-size:12.5px;line-height:14.37px;color:#555864;font-weight:400;letter-spacing:0px;white-space:pre;-webkit-text-stroke:0.2px #555864">Temporary Facilities</div><div style="position:absolute;left:1036.6px;top:649px;font-size:12.5px;line-height:14.37px;color:#555864;font-weight:400;letter-spacing:0px;white-space:pre;-webkit-text-stroke:0.2px #555864">01</div><div style="position:absolute;left:1127px;top:649px;font-size:12.5px;line-height:14.37px;color:#555864;font-weight:400;letter-spacing:0px;white-space:pre;-webkit-text-stroke:0.2px #555864">Active</div><div style="position:absolute;left:633.8px;top:691px;font-size:12.5px;line-height:14.37px;color:#555864;font-weight:400;letter-spacing:0px;white-space:pre;-webkit-text-stroke:0.2px #555864">01 51 00</div><div style="position:absolute;left:729px;top:691px;font-size:12.5px;line-height:14.37px;color:#555864;font-weight:400;letter-spacing:0px;white-space:pre;-webkit-text-stroke:0.2px #555864">Temporary Utilities</div><div style="position:absolute;left:1036.6px;top:691px;font-size:12.5px;line-height:14.37px;color:#555864;font-weight:400;letter-spacing:0px;white-space:pre;-webkit-text-stroke:0.2px #555864">01</div><div style="position:absolute;left:1127px;top:691px;font-size:12.5px;line-height:14.37px;color:#555864;font-weight:400;letter-spacing:0px;white-space:pre;-webkit-text-stroke:0.2px #555864">Active</div><div style="position:absolute;left:633.8px;top:734px;font-size:12.5px;line-height:14.37px;color:#555864;font-weight:400;letter-spacing:0px;white-space:pre;-webkit-text-stroke:0.2px #555864">01 52 00</div><div style="position:absolute;left:729px;top:734px;font-size:12.5px;line-height:14.37px;color:#555864;font-weight:400;letter-spacing:0px;white-space:pre;-webkit-text-stroke:0.2px #555864">Construction Facilities</div><div style="position:absolute;left:1036.6px;top:734px;font-size:12.5px;line-height:14.37px;color:#555864;font-weight:400;letter-spacing:0px;white-space:pre;-webkit-text-stroke:0.2px #555864">01</div><div style="position:absolute;left:1127px;top:734px;font-size:12.5px;line-height:14.37px;color:#555864;font-weight:400;letter-spacing:0px;white-space:pre;-webkit-text-stroke:0.2px #555864">Active</div><div style="position:absolute;left:633.8px;top:776px;font-size:12.5px;line-height:14.37px;color:#555864;font-weight:400;letter-spacing:0px;white-space:pre;-webkit-text-stroke:0.2px #555864">01 52 13</div><div style="position:absolute;left:729px;top:776px;font-size:12.5px;line-height:14.37px;color:#555864;font-weight:400;letter-spacing:0px;white-space:pre;-webkit-text-stroke:0.2px #555864">Field Offices</div><div style="position:absolute;left:1036.6px;top:776px;font-size:12.5px;line-height:14.37px;color:#555864;font-weight:400;letter-spacing:0px;white-space:pre;-webkit-text-stroke:0.2px #555864">01</div><div style="position:absolute;left:1127px;top:776px;font-size:12.5px;line-height:14.37px;color:#555864;font-weight:400;letter-spacing:0px;white-space:pre;-webkit-text-stroke:0.2px #555864">Active</div><div style="position:absolute;left:621.6px;top:251.5px;width:564.9999999999999px;height:1px;background:#eeeef2"></div><div style="position:absolute;left:621.6px;top:294.0px;width:564.9999999999999px;height:1px;background:#eeeef2"></div><div style="position:absolute;left:621.6px;top:336.5px;width:564.9999999999999px;height:1px;background:#eeeef2"></div><div style="position:absolute;left:621.6px;top:379.0px;width:564.9999999999999px;height:1px;background:#eeeef2"></div><div style="position:absolute;left:621.6px;top:421.5px;width:564.9999999999999px;height:1px;background:#eeeef2"></div><div style="position:absolute;left:621.6px;top:464.0px;width:564.9999999999999px;height:1px;background:#eeeef2"></div><div style="position:absolute;left:621.6px;top:506.5px;width:564.9999999999999px;height:1px;background:#eeeef2"></div><div style="position:absolute;left:621.6px;top:549.0px;width:564.9999999999999px;height:1px;background:#eeeef2"></div><div style="position:absolute;left:621.6px;top:591.5px;width:564.9999999999999px;height:1px;background:#eeeef2"></div><div style="position:absolute;left:621.6px;top:634.0px;width:564.9999999999999px;height:1px;background:#eeeef2"></div><div style="position:absolute;left:621.6px;top:676.5px;width:564.9999999999999px;height:1px;background:#eeeef2"></div><div style="position:absolute;left:621.6px;top:719.0px;width:564.9999999999999px;height:1px;background:#eeeef2"></div><div style="position:absolute;left:621.6px;top:761.5px;width:564.9999999999999px;height:1px;background:#eeeef2"></div><div style="position:absolute;left:1187.6px;top:210.5px;width:5.400000000000091px;height:567.5px;background:#e8e9ed;border-radius:3px;box-sizing:border-box;border:1px solid #d5d6db"></div><div style="position:absolute;left:1187.6px;top:210.75px;width:5.400000000000091px;height:65.64999999999998px;background:#b3b3b5;border-radius:3px"></div><div style="position:absolute;left:1217.5px;top:167px;width:573.5px;height:296.5px;box-sizing:border-box;border:1px solid #e4e4e8;border-top:2px solid #dedee2;border-bottom:none;background:#fff"></div><div style="position:absolute;left:1218.5px;top:208.0px;width:564.4000000000001px;height:2px;background:#e4e4e8"></div><div style="position:absolute;left:1405px;top:169px;width:2px;height:39.5px;background:#dcdcdc"></div><div style="position:absolute;left:1593.75px;top:169px;width:2px;height:39.5px;background:#dcdcdc"></div><div style="position:absolute;left:1782.9px;top:169px;width:1px;height:40.5px;background:#e8e8ea"></div><div style="position:absolute;left:1229.5px;top:183px;font-size:12.3px;line-height:14.14px;color:#1f1f1f;font-weight:400;letter-spacing:0.1px;white-space:pre;-webkit-text-stroke:0.45px #1f1f1f">Code</div><svg style="position:absolute;left:1385.4px;top:184.75px" width="12" height="9" viewBox="0 0 12 9"><rect x="0" y="0" width="12" height="1.9" rx="0.5" fill="#8b8b8b"/><rect x="2.4" y="3.5" width="7.2" height="1.7" rx="0.5" fill="#8b8b8b"/><rect x="4.5" y="6.8" width="3" height="1.8" rx="0.6" fill="#8b8b8b"/></svg><div style="position:absolute;left:1418.5px;top:183px;font-size:12.3px;line-height:14.14px;color:#1f1f1f;font-weight:400;letter-spacing:0.1px;white-space:pre;-webkit-text-stroke:0.45px #1f1f1f">Description</div><svg style="position:absolute;left:1574.2px;top:184.75px" width="12" height="9" viewBox="0 0 12 9"><rect x="0" y="0" width="12" height="1.9" rx="0.5" fill="#8b8b8b"/><rect x="2.4" y="3.5" width="7.2" height="1.7" rx="0.5" fill="#8b8b8b"/><rect x="4.5" y="6.8" width="3" height="1.8" rx="0.6" fill="#8b8b8b"/></svg><div style="position:absolute;left:1607.25px;top:183px;font-size:12.3px;line-height:14.14px;color:#1f1f1f;font-weight:400;letter-spacing:0.1px;white-space:pre;-webkit-text-stroke:0.45px #1f1f1f">Status</div><svg style="position:absolute;left:1762.25px;top:184.75px" width="12" height="9" viewBox="0 0 12 9"><rect x="0" y="0" width="12" height="1.9" rx="0.5" fill="#5a7de2"/><rect x="2.4" y="3.5" width="7.2" height="1.7" rx="0.5" fill="#5a7de2"/><rect x="4.5" y="6.8" width="3" height="1.8" rx="0.6" fill="#5a7de2"/></svg><div style="position:absolute;left:1218.5px;top:210.0px;width:564.4000000000001px;height:42.5px;background:#ebe6f8"></div><div style="position:absolute;left:1230px;top:224px;font-size:12.5px;line-height:14.37px;color:#555864;font-weight:400;letter-spacing:0px;white-space:pre;-webkit-text-stroke:0.2px #555864">PH1</div><div style="position:absolute;left:1418.8px;top:224px;font-size:12.5px;line-height:14.37px;color:#555864;font-weight:400;letter-spacing:0px;white-space:pre;-webkit-text-stroke:0.2px #555864">Phase 1</div><div style="position:absolute;left:1607.5px;top:224px;font-size:12.5px;line-height:14.37px;color:#555864;font-weight:400;letter-spacing:0px;white-space:pre;-webkit-text-stroke:0.2px #555864">Active</div><div style="position:absolute;left:1230px;top:266px;font-size:12.5px;line-height:14.37px;color:#555864;font-weight:400;letter-spacing:0px;white-space:pre;-webkit-text-stroke:0.2px #555864">PH2</div><div style="position:absolute;left:1418.8px;top:266px;font-size:12.5px;line-height:14.37px;color:#555864;font-weight:400;letter-spacing:0px;white-space:pre;-webkit-text-stroke:0.2px #555864">Phase 2</div><div style="position:absolute;left:1607.5px;top:266px;font-size:12.5px;line-height:14.37px;color:#555864;font-weight:400;letter-spacing:0px;white-space:pre;-webkit-text-stroke:0.2px #555864">Active</div><div style="position:absolute;left:1218.5px;top:251.5px;width:564.4000000000001px;height:1px;background:#eeeef2"></div><div style="position:absolute;left:1218.5px;top:294.0px;width:564.4000000000001px;height:1px;background:#eeeef2"></div><div style="position:absolute;left:1783.9px;top:210.5px;width:6.099999999999909px;height:254.0px;background:#e8e9ed;border-radius:3px;box-sizing:border-box;border:1px solid #d5d6db"></div><div style="position:absolute;left:1218px;top:462.5px;width:566px;height:1px;background:#e4e4e8"></div><div style="position:absolute;left:1217px;top:478.20000000000005px;width:51px;height:31px;background:#6a6fd8;border-radius:3px;box-shadow:0 1px 2px rgba(0,0,0,0.2)"></div><div style="position:absolute;left:1228.5px;top:488px;font-size:12px;line-height:13.80px;color:#fff;font-weight:700;letter-spacing:0.8px;white-space:pre;">ADD</div><div style="position:absolute;left:1282.3px;top:478.20000000000005px;width:66.2px;height:31px;box-sizing:border-box;background:transparent;border:1px solid #e2e2e6;border-radius:3px"></div><div style="position:absolute;left:1294.2px;top:488px;font-size:12px;line-height:13.80px;color:#c4c4ca;font-weight:700;letter-spacing:0.8px;white-space:pre;">CLEAR</div><div style="position:absolute;left:1363px;top:478.20000000000005px;width:101.5px;height:31px;box-sizing:border-box;background:#fff;border:1px solid #dcdce2;border-radius:3px"></div><div style="position:absolute;left:1375.1px;top:488px;font-size:12px;line-height:13.80px;color:#6a6fcf;font-weight:700;letter-spacing:0.8px;white-space:pre;">COPY FROM</div><div style="position:absolute;left:1479.8px;top:478.20000000000005px;width:143.2px;height:31px;box-sizing:border-box;background:#fff;border:1px solid #dcdce2;border-radius:3px"></div><div style="position:absolute;left:1491.3px;top:488px;font-size:12px;line-height:13.80px;color:#6a6fcf;font-weight:700;letter-spacing:0.8px;white-space:pre;">EXPORT TO EXCEL</div><svg style="position:absolute;left:1218.1px;top:550.2px" width="11.6" height="11.6" viewBox="0 0 12 12"><rect x="0" y="0" width="12" height="12" rx="2" fill="#6a6fd8"/><path d="M2.6 6.2 L5 8.6 L9.6 3.4" fill="none" stroke="#fff" stroke-width="1.7" stroke-linecap="round" stroke-linejoin="round"/></svg><div style="position:absolute;left:1234px;top:549px;font-size:13px;line-height:14.95px;color:#3b3b3b;font-weight:400;letter-spacing:0.15px;white-space:pre;-webkit-text-stroke:0.15px #3b3b3b">Location</div><svg style="position:absolute;left:1627px;top:550.2px" width="11.6" height="11.6" viewBox="0 0 12 12"><rect x="0" y="0" width="12" height="12" rx="2" fill="#d3d3d6"/><path d="M2.6 6.2 L5 8.6 L9.6 3.4" fill="none" stroke="#f4f4f4" stroke-width="1.7" stroke-linecap="round" stroke-linejoin="round"/></svg><div style="position:absolute;left:1643px;top:549px;font-size:13px;line-height:14.95px;color:#3b3b3b;font-weight:400;letter-spacing:0.2px;white-space:pre;-webkit-text-stroke:0.15px #3b3b3b">Turn it on for estimating</div><div style="position:absolute;left:1217.5px;top:586px;width:573.5px;height:191px;box-sizing:border-box;border:1px solid #e4e4e8;border-top:2px solid #dedee2;border-bottom:none;background:#fff"></div><div style="position:absolute;left:1218.5px;top:628.0px;width:564.4000000000001px;height:2px;background:#e4e4e8"></div><div style="position:absolute;left:1405px;top:588px;width:2px;height:40.5px;background:#dcdcdc"></div><div style="position:absolute;left:1593.75px;top:588px;width:2px;height:40.5px;background:#dcdcdc"></div><div style="position:absolute;left:1782.9px;top:588px;width:1px;height:41.5px;background:#e8e8ea"></div><div style="position:absolute;left:1229.5px;top:602px;font-size:12.3px;line-height:14.14px;color:#1f1f1f;font-weight:400;letter-spacing:0.1px;white-space:pre;-webkit-text-stroke:0.45px #1f1f1f">Code</div><svg style="position:absolute;left:1385.4px;top:604.25px" width="12" height="9" viewBox="0 0 12 9"><rect x="0" y="0" width="12" height="1.9" rx="0.5" fill="#8b8b8b"/><rect x="2.4" y="3.5" width="7.2" height="1.7" rx="0.5" fill="#8b8b8b"/><rect x="4.5" y="6.8" width="3" height="1.8" rx="0.6" fill="#8b8b8b"/></svg><div style="position:absolute;left:1418.5px;top:602px;font-size:12.3px;line-height:14.14px;color:#1f1f1f;font-weight:400;letter-spacing:0.1px;white-space:pre;-webkit-text-stroke:0.45px #1f1f1f">Description</div><svg style="position:absolute;left:1574.2px;top:604.25px" width="12" height="9" viewBox="0 0 12 9"><rect x="0" y="0" width="12" height="1.9" rx="0.5" fill="#8b8b8b"/><rect x="2.4" y="3.5" width="7.2" height="1.7" rx="0.5" fill="#8b8b8b"/><rect x="4.5" y="6.8" width="3" height="1.8" rx="0.6" fill="#8b8b8b"/></svg><div style="position:absolute;left:1607.25px;top:602px;font-size:12.3px;line-height:14.14px;color:#1f1f1f;font-weight:400;letter-spacing:0.1px;white-space:pre;-webkit-text-stroke:0.45px #1f1f1f">Status</div><svg style="position:absolute;left:1762.25px;top:604.25px" width="12" height="9" viewBox="0 0 12 9"><rect x="0" y="0" width="12" height="1.9" rx="0.5" fill="#5a7de2"/><rect x="2.4" y="3.5" width="7.2" height="1.7" rx="0.5" fill="#5a7de2"/><rect x="4.5" y="6.8" width="3" height="1.8" rx="0.6" fill="#5a7de2"/></svg><div style="position:absolute;left:1218.5px;top:630.0px;width:564.4000000000001px;height:42.5px;background:#ebe6f8"></div><div style="position:absolute;left:1230px;top:644px;font-size:12.5px;line-height:14.37px;color:#555864;font-weight:400;letter-spacing:0px;white-space:pre;-webkit-text-stroke:0.2px #555864">A</div><div style="position:absolute;left:1418.8px;top:644px;font-size:12.5px;line-height:14.37px;color:#555864;font-weight:400;letter-spacing:0px;white-space:pre;-webkit-text-stroke:0.2px #555864">Building A</div><div style="position:absolute;left:1607.5px;top:644px;font-size:12.5px;line-height:14.37px;color:#555864;font-weight:400;letter-spacing:0px;white-space:pre;-webkit-text-stroke:0.2px #555864">Active</div><div style="position:absolute;left:1230px;top:686px;font-size:12.5px;line-height:14.37px;color:#555864;font-weight:400;letter-spacing:0px;white-space:pre;-webkit-text-stroke:0.2px #555864">B</div><div style="position:absolute;left:1418.8px;top:686px;font-size:12.5px;line-height:14.37px;color:#555864;font-weight:400;letter-spacing:0px;white-space:pre;-webkit-text-stroke:0.2px #555864">Building B</div><div style="position:absolute;left:1607.5px;top:686px;font-size:12.5px;line-height:14.37px;color:#555864;font-weight:400;letter-spacing:0px;white-space:pre;-webkit-text-stroke:0.2px #555864">Active</div><div style="position:absolute;left:1230px;top:729px;font-size:12.5px;line-height:14.37px;color:#555864;font-weight:400;letter-spacing:0px;white-space:pre;-webkit-text-stroke:0.2px #555864">C</div><div style="position:absolute;left:1418.8px;top:729px;font-size:12.5px;line-height:14.37px;color:#555864;font-weight:400;letter-spacing:0px;white-space:pre;-webkit-text-stroke:0.2px #555864">Building C</div><div style="position:absolute;left:1607.5px;top:729px;font-size:12.5px;line-height:14.37px;color:#555864;font-weight:400;letter-spacing:0px;white-space:pre;-webkit-text-stroke:0.2px #555864">Active</div><div style="position:absolute;left:1218.5px;top:671.5px;width:564.4000000000001px;height:1px;background:#eeeef2"></div><div style="position:absolute;left:1218.5px;top:714.0px;width:564.4000000000001px;height:1px;background:#eeeef2"></div><div style="position:absolute;left:1218.5px;top:756.5px;width:564.4000000000001px;height:1px;background:#eeeef2"></div><div style="position:absolute;left:1783.9px;top:630.5px;width:6.099999999999909px;height:147.5px;background:#e8e9ed;border-radius:3px;box-sizing:border-box;border:1px solid #d5d6db"></div></div><div style="position:absolute;left:1919px;top:0px;width:1px;height:80px;background:#3a3a3c"></div><div style="position:absolute;left:1919px;top:80px;width:1px;height:68px;background:#5c5b64"></div></div></body></html>
